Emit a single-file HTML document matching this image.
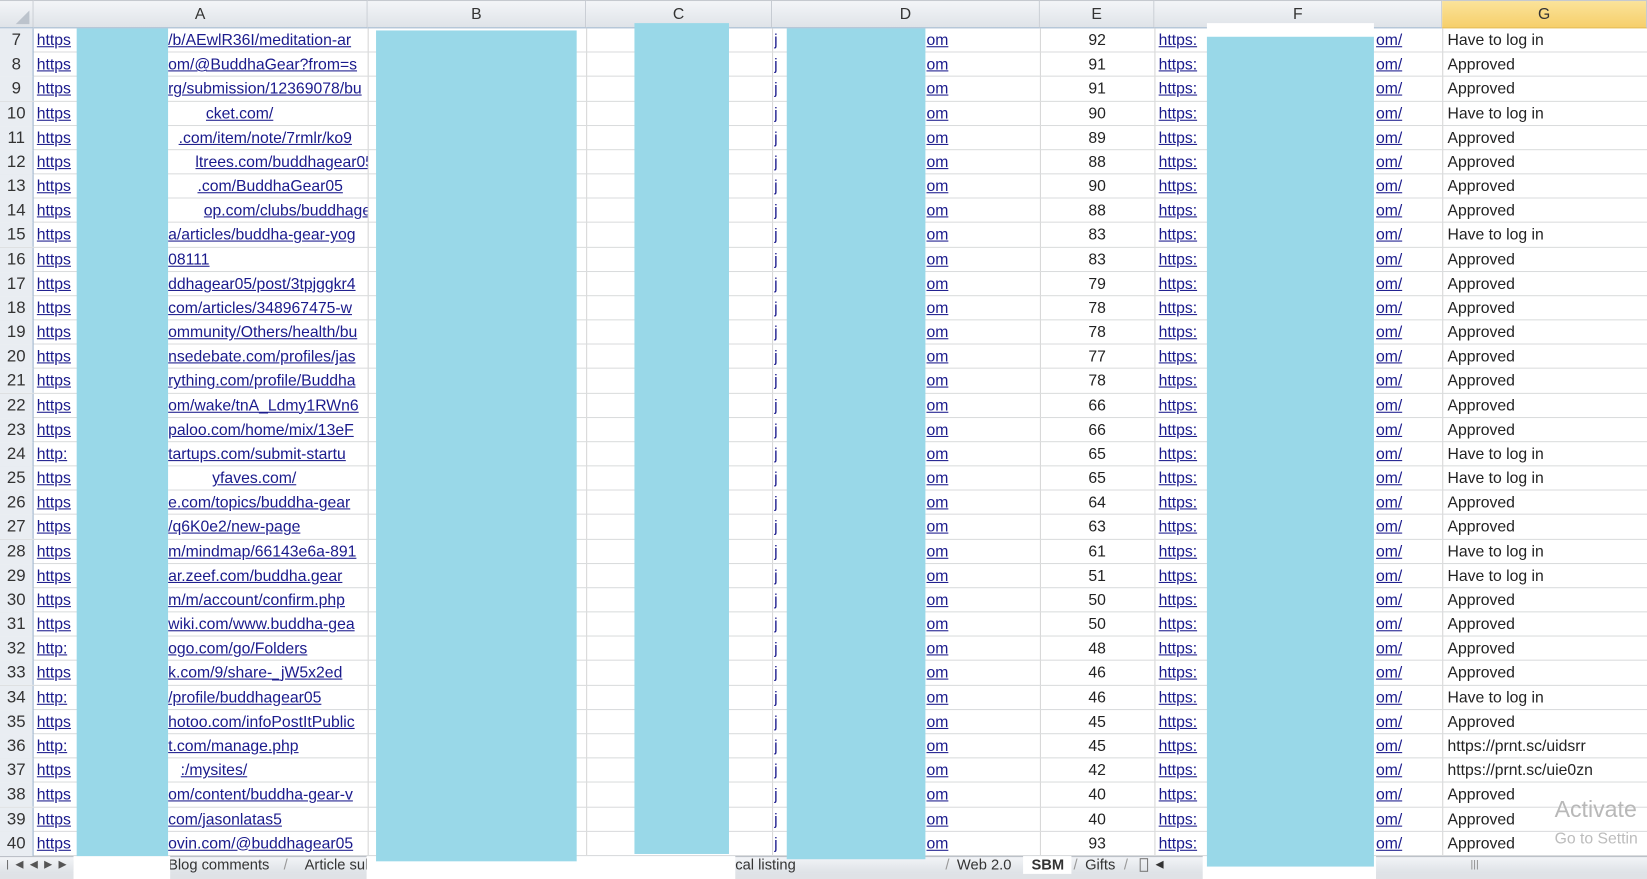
<!DOCTYPE html>
<html><head><meta charset="utf-8"><style>
*{margin:0;padding:0;box-sizing:border-box}
body{width:1647px;height:879px;overflow:hidden;background:#fff;font-family:"Liberation Sans",Arial,sans-serif}
#w{position:absolute;left:0;top:0;width:1568px;height:837px;transform:scale(1.0504);transform-origin:0 0;overflow:hidden;background:#fff}
.hdr{position:absolute;top:0;height:27px;background:linear-gradient(#f3f5f8,#dfe3e8);border-bottom:1px solid #9eb6ce;border-top:1px solid #c5c9cf;font-size:15px;color:#333;text-align:center;line-height:25px;border-right:1px solid #c6cbd2}
.vl{position:absolute;top:27px;height:788px;width:1px;background:#d6d6d6}
#rows{position:absolute;top:27px;left:0;width:1568px}
.r{position:relative;height:23.18px;border-bottom:1px solid #dadcdd;font-size:15px;line-height:24px;white-space:nowrap}
.r span{position:absolute;top:0;overflow:hidden}
.n{left:0;width:32px;background:#e9edf2;text-align:center;color:#333;border-right:1px solid #9eb6ce;height:23px;font-size:16px}
.l{color:#1a1a8c;text-decoration:underline}
.a1{left:35px}
.a2{width:190px}
.d1{left:737px}
.d2{left:882px}
.e{left:990px;width:109px;text-align:center;color:#222}
.f1{left:1103px}
.f2{left:1310px}
.g{left:1378px;color:#222}
.bx{position:absolute;background:#99d8e8}
.wh{position:absolute;background:#fff}
#tabs{position:absolute;top:815px;left:0;width:1568px;height:17px;background:linear-gradient(#f2f4f7,#dde1e6);border-top:1px solid #b7bcc4;font-size:14px;color:#333}
#tabs span{position:absolute;top:0px;line-height:15px}
#st{position:absolute;top:832px;left:0;width:1568px;height:5px;background:#dfe2e6}
</style></head><body><div id="w">
<div class="hdr" style="left:0;width:32px"><div style="position:absolute;right:3px;bottom:3px;width:0;height:0;border-left:13px solid transparent;border-bottom:13px solid #bcc3cc"></div></div>
<div class="hdr" style="left:32px;width:318px">A</div>
<div class="hdr" style="left:350px;width:208px">B</div>
<div class="hdr" style="left:558px;width:177px">C</div>
<div class="hdr" style="left:735px;width:255px">D</div>
<div class="hdr" style="left:990px;width:109px">E</div>
<div class="hdr" style="left:1099px;width:274px">F</div>
<div class="hdr" style="left:1373px;width:195px;background:linear-gradient(#fbe39a,#f6cf6b);border-bottom-color:#e3b53f">G</div>
<div class="vl" style="left:350px"></div><div class="vl" style="left:558px"></div><div class="vl" style="left:735px"></div><div class="vl" style="left:990px"></div><div class="vl" style="left:1099px"></div><div class="vl" style="left:1373px"></div>
<div id="rows">
<div class="r"><span class="n">7</span><span class="a1 l">https</span><span class="a2 l" style="left:160px">/b/AEwlR36I/meditation-ar</span><span class="d1 l">j</span><span class="d2 l">om</span><span class="e">92</span><span class="f1 l">https:</span><span class="f2 l">om/</span><span class="g">Have to log in</span></div>
<div class="r"><span class="n">8</span><span class="a1 l">https</span><span class="a2 l" style="left:160px">om/@BuddhaGear?from=s</span><span class="d1 l">j</span><span class="d2 l">om</span><span class="e">91</span><span class="f1 l">https:</span><span class="f2 l">om/</span><span class="g">Approved</span></div>
<div class="r"><span class="n">9</span><span class="a1 l">https</span><span class="a2 l" style="left:160px">rg/submission/12369078/bu</span><span class="d1 l">j</span><span class="d2 l">om</span><span class="e">91</span><span class="f1 l">https:</span><span class="f2 l">om/</span><span class="g">Approved</span></div>
<div class="r"><span class="n">10</span><span class="a1 l">https</span><span class="a2 l" style="left:196px;width:154px">cket.com/</span><span class="d1 l">j</span><span class="d2 l">om</span><span class="e">90</span><span class="f1 l">https:</span><span class="f2 l">om/</span><span class="g">Have to log in</span></div>
<div class="r"><span class="n">11</span><span class="a1 l">https</span><span class="a2 l" style="left:170px;width:180px">.com/item/note/7rmlr/ko9</span><span class="d1 l">j</span><span class="d2 l">om</span><span class="e">89</span><span class="f1 l">https:</span><span class="f2 l">om/</span><span class="g">Approved</span></div>
<div class="r"><span class="n">12</span><span class="a1 l">https</span><span class="a2 l" style="left:186px;width:164px">ltrees.com/buddhagear05</span><span class="d1 l">j</span><span class="d2 l">om</span><span class="e">88</span><span class="f1 l">https:</span><span class="f2 l">om/</span><span class="g">Approved</span></div>
<div class="r"><span class="n">13</span><span class="a1 l">https</span><span class="a2 l" style="left:188px;width:162px">.com/BuddhaGear05</span><span class="d1 l">j</span><span class="d2 l">om</span><span class="e">90</span><span class="f1 l">https:</span><span class="f2 l">om/</span><span class="g">Approved</span></div>
<div class="r"><span class="n">14</span><span class="a1 l">https</span><span class="a2 l" style="left:194px;width:156px">op.com/clubs/buddhagear0</span><span class="d1 l">j</span><span class="d2 l">om</span><span class="e">88</span><span class="f1 l">https:</span><span class="f2 l">om/</span><span class="g">Approved</span></div>
<div class="r"><span class="n">15</span><span class="a1 l">https</span><span class="a2 l" style="left:160px">a/articles/buddha-gear-yog</span><span class="d1 l">j</span><span class="d2 l">om</span><span class="e">83</span><span class="f1 l">https:</span><span class="f2 l">om/</span><span class="g">Have to log in</span></div>
<div class="r"><span class="n">16</span><span class="a1 l">https</span><span class="a2 l" style="left:160px">08111</span><span class="d1 l">j</span><span class="d2 l">om</span><span class="e">83</span><span class="f1 l">https:</span><span class="f2 l">om/</span><span class="g">Approved</span></div>
<div class="r"><span class="n">17</span><span class="a1 l">https</span><span class="a2 l" style="left:160px">ddhagear05/post/3tpjggkr4</span><span class="d1 l">j</span><span class="d2 l">om</span><span class="e">79</span><span class="f1 l">https:</span><span class="f2 l">om/</span><span class="g">Approved</span></div>
<div class="r"><span class="n">18</span><span class="a1 l">https</span><span class="a2 l" style="left:160px">com/articles/348967475-w</span><span class="d1 l">j</span><span class="d2 l">om</span><span class="e">78</span><span class="f1 l">https:</span><span class="f2 l">om/</span><span class="g">Approved</span></div>
<div class="r"><span class="n">19</span><span class="a1 l">https</span><span class="a2 l" style="left:160px">ommunity/Others/health/bu</span><span class="d1 l">j</span><span class="d2 l">om</span><span class="e">78</span><span class="f1 l">https:</span><span class="f2 l">om/</span><span class="g">Approved</span></div>
<div class="r"><span class="n">20</span><span class="a1 l">https</span><span class="a2 l" style="left:160px">nsedebate.com/profiles/jas</span><span class="d1 l">j</span><span class="d2 l">om</span><span class="e">77</span><span class="f1 l">https:</span><span class="f2 l">om/</span><span class="g">Approved</span></div>
<div class="r"><span class="n">21</span><span class="a1 l">https</span><span class="a2 l" style="left:160px">rything.com/profile/Buddha</span><span class="d1 l">j</span><span class="d2 l">om</span><span class="e">78</span><span class="f1 l">https:</span><span class="f2 l">om/</span><span class="g">Approved</span></div>
<div class="r"><span class="n">22</span><span class="a1 l">https</span><span class="a2 l" style="left:160px">om/wake/tnA_Ldmy1RWn6</span><span class="d1 l">j</span><span class="d2 l">om</span><span class="e">66</span><span class="f1 l">https:</span><span class="f2 l">om/</span><span class="g">Approved</span></div>
<div class="r"><span class="n">23</span><span class="a1 l">https</span><span class="a2 l" style="left:160px">paloo.com/home/mix/13eF</span><span class="d1 l">j</span><span class="d2 l">om</span><span class="e">66</span><span class="f1 l">https:</span><span class="f2 l">om/</span><span class="g">Approved</span></div>
<div class="r"><span class="n">24</span><span class="a1 l">http:</span><span class="a2 l" style="left:160px">tartups.com/submit-startu</span><span class="d1 l">j</span><span class="d2 l">om</span><span class="e">65</span><span class="f1 l">https:</span><span class="f2 l">om/</span><span class="g">Have to log in</span></div>
<div class="r"><span class="n">25</span><span class="a1 l">https</span><span class="a2 l" style="left:202px;width:148px">yfaves.com/</span><span class="d1 l">j</span><span class="d2 l">om</span><span class="e">65</span><span class="f1 l">https:</span><span class="f2 l">om/</span><span class="g">Have to log in</span></div>
<div class="r"><span class="n">26</span><span class="a1 l">https</span><span class="a2 l" style="left:160px">e.com/topics/buddha-gear</span><span class="d1 l">j</span><span class="d2 l">om</span><span class="e">64</span><span class="f1 l">https:</span><span class="f2 l">om/</span><span class="g">Approved</span></div>
<div class="r"><span class="n">27</span><span class="a1 l">https</span><span class="a2 l" style="left:160px">/q6K0e2/new-page</span><span class="d1 l">j</span><span class="d2 l">om</span><span class="e">63</span><span class="f1 l">https:</span><span class="f2 l">om/</span><span class="g">Approved</span></div>
<div class="r"><span class="n">28</span><span class="a1 l">https</span><span class="a2 l" style="left:160px">m/mindmap/66143e6a-891</span><span class="d1 l">j</span><span class="d2 l">om</span><span class="e">61</span><span class="f1 l">https:</span><span class="f2 l">om/</span><span class="g">Have to log in</span></div>
<div class="r"><span class="n">29</span><span class="a1 l">https</span><span class="a2 l" style="left:160px">ar.zeef.com/buddha.gear</span><span class="d1 l">j</span><span class="d2 l">om</span><span class="e">51</span><span class="f1 l">https:</span><span class="f2 l">om/</span><span class="g">Have to log in</span></div>
<div class="r"><span class="n">30</span><span class="a1 l">https</span><span class="a2 l" style="left:160px">m/m/account/confirm.php</span><span class="d1 l">j</span><span class="d2 l">om</span><span class="e">50</span><span class="f1 l">https:</span><span class="f2 l">om/</span><span class="g">Approved</span></div>
<div class="r"><span class="n">31</span><span class="a1 l">https</span><span class="a2 l" style="left:160px">wiki.com/www.buddha-gea</span><span class="d1 l">j</span><span class="d2 l">om</span><span class="e">50</span><span class="f1 l">https:</span><span class="f2 l">om/</span><span class="g">Approved</span></div>
<div class="r"><span class="n">32</span><span class="a1 l">http:</span><span class="a2 l" style="left:160px">ogo.com/go/Folders</span><span class="d1 l">j</span><span class="d2 l">om</span><span class="e">48</span><span class="f1 l">https:</span><span class="f2 l">om/</span><span class="g">Approved</span></div>
<div class="r"><span class="n">33</span><span class="a1 l">https</span><span class="a2 l" style="left:160px">k.com/9/share-_jW5x2ed</span><span class="d1 l">j</span><span class="d2 l">om</span><span class="e">46</span><span class="f1 l">https:</span><span class="f2 l">om/</span><span class="g">Approved</span></div>
<div class="r"><span class="n">34</span><span class="a1 l">http:</span><span class="a2 l" style="left:160px">/profile/buddhagear05</span><span class="d1 l">j</span><span class="d2 l">om</span><span class="e">46</span><span class="f1 l">https:</span><span class="f2 l">om/</span><span class="g">Have to log in</span></div>
<div class="r"><span class="n">35</span><span class="a1 l">https</span><span class="a2 l" style="left:160px">hotoo.com/infoPostItPublic</span><span class="d1 l">j</span><span class="d2 l">om</span><span class="e">45</span><span class="f1 l">https:</span><span class="f2 l">om/</span><span class="g">Approved</span></div>
<div class="r"><span class="n">36</span><span class="a1 l">http:</span><span class="a2 l" style="left:160px">t.com/manage.php</span><span class="d1 l">j</span><span class="d2 l">om</span><span class="e">45</span><span class="f1 l">https:</span><span class="f2 l">om/</span><span class="g">https://prnt.sc/uidsrr</span></div>
<div class="r"><span class="n">37</span><span class="a1 l">https</span><span class="a2 l" style="left:172px;width:178px">:/mysites/</span><span class="d1 l">j</span><span class="d2 l">om</span><span class="e">42</span><span class="f1 l">https:</span><span class="f2 l">om/</span><span class="g">https://prnt.sc/uie0zn</span></div>
<div class="r"><span class="n">38</span><span class="a1 l">https</span><span class="a2 l" style="left:160px">om/content/buddha-gear-v</span><span class="d1 l">j</span><span class="d2 l">om</span><span class="e">40</span><span class="f1 l">https:</span><span class="f2 l">om/</span><span class="g">Approved</span></div>
<div class="r"><span class="n">39</span><span class="a1 l">https</span><span class="a2 l" style="left:160px">com/jasonlatas5</span><span class="d1 l">j</span><span class="d2 l">om</span><span class="e">40</span><span class="f1 l">https:</span><span class="f2 l">om/</span><span class="g">Approved</span></div>
<div class="r"><span class="n">40</span><span class="a1 l">https</span><span class="a2 l" style="left:160px">ovin.com/@buddhagear05</span><span class="d1 l">j</span><span class="d2 l">om</span><span class="e">93</span><span class="f1 l">https:</span><span class="f2 l">om/</span><span class="g">Approved</span></div>
</div>
<div style="position:absolute;left:1480px;top:758px;font-size:22px;color:#b8b8b8">Activate</div>
<div style="position:absolute;left:1480px;top:790px;font-size:15px;color:#bcbcbc">Go to Settin</div>
<div id="tabs">
<span style="left:6px;color:#555;font-size:10px;letter-spacing:6px">|◀◀▶▶|</span>
<span style="left:160px">Blog comments</span>
<span style="left:270px;color:#999">/</span>
<span style="left:290px">Article sub</span>
<span style="left:700px">cal listing</span>
<span style="left:900px;color:#999">/</span>
<span style="left:911px">Web 2.0</span>
<span style="left:974px;width:46px;height:17px;background:#fff;top:-1px"></span>
<span style="left:982px;font-weight:bold">SBM</span>
<span style="left:1022px;color:#999">/</span>
<span style="left:1033px">Gifts</span>
<span style="left:1070px;color:#999">/</span>
<span style="left:1085px;width:8px;height:13px;border:1px solid #777;top:1px"></span>
<span style="left:1100px;font-size:10px">◀</span>
<span style="left:1400px;font-size:10px;color:#888">|||</span>
</div>
<div id="st"></div>
<div class="wh" style="left:70px;top:815px;width:92px;height:22px"></div>
<div class="wh" style="left:349px;top:815px;width:351px;height:22px"></div>
<div class="wh" style="left:1145px;top:815px;width:165px;height:22px"></div>
<div class="wh" style="left:1149px;top:22px;width:159px;height:10px"></div>
<div class="bx" style="left:73px;top:27px;width:87px;height:788px"></div>
<div class="bx" style="left:358px;top:29px;width:191px;height:791px"></div>
<div class="bx" style="left:604px;top:22px;width:90px;height:791px"></div>
<div class="bx" style="left:749px;top:27px;width:132px;height:791px"></div>
<div class="bx" style="left:1149px;top:35px;width:159px;height:790px"></div>
</div></body></html>
